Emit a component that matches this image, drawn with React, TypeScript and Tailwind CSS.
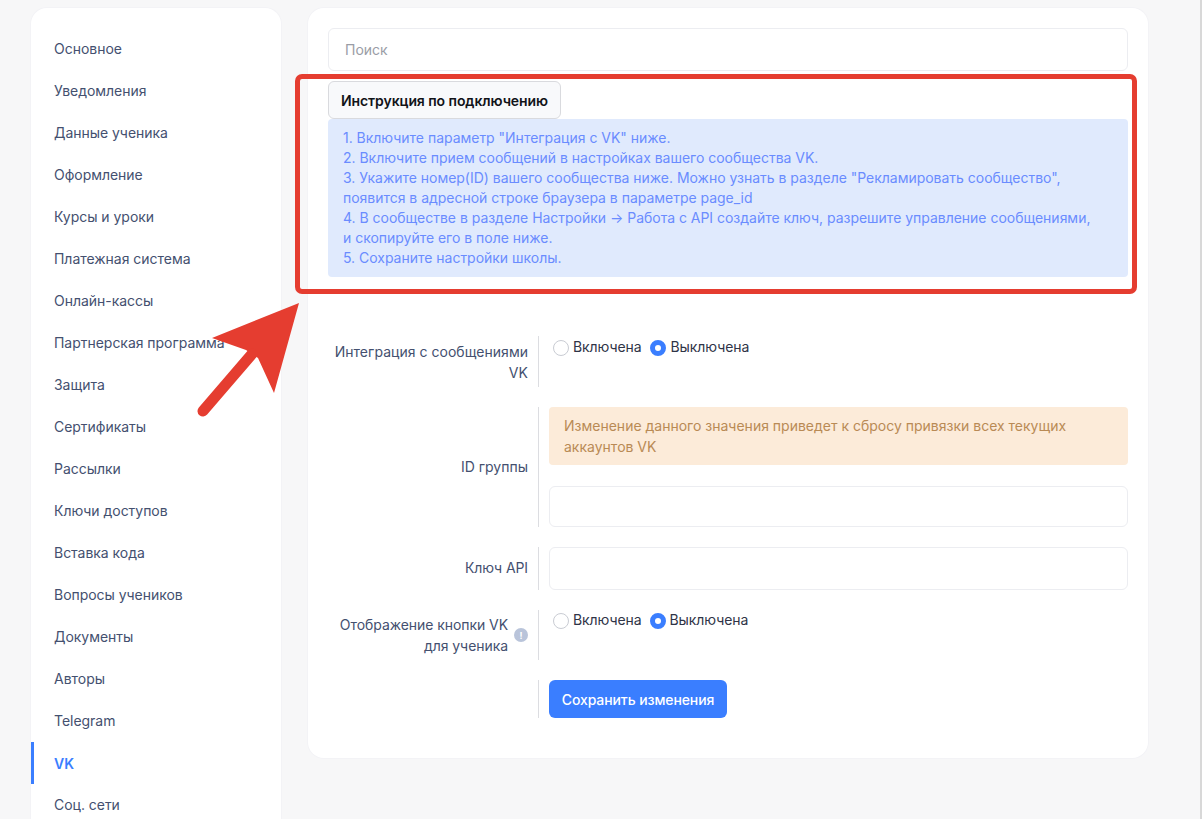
import React from "react";

const menuItems = [
  "Основное",
  "Уведомления",
  "Данные ученика",
  "Оформление",
  "Курсы и уроки",
  "Платежная система",
  "Онлайн-кассы",
  "Партнерская программа",
  "Защита",
  "Сертификаты",
  "Рассылки",
  "Ключи доступов",
  "Вставка кода",
  "Вопросы учеников",
  "Документы",
  "Авторы",
  "Telegram",
  "VK",
  "Соц. сети",
];

function Sidebar() {
  return (
    <aside className="w-[250px] shrink-0 self-start rounded-t-[16px] bg-white pt-[20px] shadow-[0_0_0_1px_#f3f3f6]">
      {menuItems.map((item) => (
        <div
          key={item}
          className={
            item === "VK"
              ? "flex h-[42px] items-center border-l-[3px] border-[#3a7eff] pl-[20px] text-[14px] font-semibold text-[#3a7eff]"
              : "flex h-[42px] -translate-y-[1px] items-center pl-[23px] text-[14px] tracking-[-0.03px] text-[#44506f]"
          }
        >
          {item}
        </div>
      ))}
    </aside>
  );
}

function Radios({ top, gap }: { top: string; gap: string }) {
  return (
    <div className={`flex items-start pl-[4px] text-[14px] leading-[21px] tracking-[-0.08px] text-[#2f3447] ${top}`}>
      <span className="mt-[4px] h-[16px] w-[16px] rounded-full border border-[#c9ccd3] bg-white" />
      <span className="ml-[4px]">Включена</span>
      <span className="ml-[8px] mt-[4px] h-[16px] w-[16px] rounded-full border-[5px] border-[#3a7eff] bg-white" />
      <span className={gap}>Выключена</span>
    </div>
  );
}

function FormRow({
  label,
  className,
  labelClass,
  children,
}: {
  label: React.ReactNode;
  className?: string;
  labelClass?: string;
  children?: React.ReactNode;
}) {
  return (
    <div className={`flex ${className ?? ""}`}>
      <div
        className={`flex w-[211px] shrink-0 items-center justify-end border-r border-[#dcdde1] py-[4px] pr-[10px] text-right text-[14px] leading-[21px] text-[#44506f] ${labelClass ?? ""}`}
      >
        {label}
      </div>
      <div className="min-w-0 flex-1 pl-[10px]">{children}</div>
    </div>
  );
}

export default function App() {
  return (
    <div
      className="relative h-[819px] overflow-hidden border-r-2 border-[#d8d8d8] bg-[#f7f7f8]"
      style={{ fontFamily: "Inter, 'Liberation Sans', sans-serif" }}
    >
      <div className="flex items-start gap-[27px] pl-[31px] pt-[8px]">
        <Sidebar />
        <main className="h-[750px] w-[840px] shrink-0 rounded-[16px] bg-white px-[20px] pt-[20px] shadow-[0_0_0_1px_#f3f3f6]">
          <div className="flex h-[43px] items-center rounded-[6px] border border-[#ecedf1] pl-[16px] text-[14px] text-[#9a9da6]">
            Поиск
          </div>
          <div className="mt-[10px] flex h-[38px] w-[233px] items-center justify-center rounded-[6px] border border-[#d9dade] bg-[#f8f9fb] text-[14px] font-semibold tracking-[-0.08px] text-[#111318]">
            Инструкция по подключению
          </div>
          <div className="rounded-[4px] bg-[#e0eafd] py-[9px] pl-[15px] pr-[30px] text-[14px] leading-[20px] tracking-[-0.02px] text-[#6a8cff]">
            1. Включите параметр "Интеграция с VK" ниже.
            <br />
            2. Включите прием сообщений в настройках вашего сообщества VK.
            <br />
            3. Укажите номер(ID) вашего сообщества ниже. Можно узнать в разделе "Рекламировать сообщество", появится в адресной строке браузера в параметре page_id
            <br />
            4. В сообществе в разделе Настройки → Работа с API создайте ключ, разрешите управление сообщениями, и скопируйте его в поле ниже.
            <br />
            5. Сохраните настройки школы.
          </div>

          <div className="mt-[59px] flex flex-col gap-[20px]">
            <FormRow label="Интеграция с сообщениями VK" className="h-[51px] tracking-[0.03px]">
              <Radios top="pt-0" gap="ml-[5px]" />
            </FormRow>
            <FormRow label="ID группы" labelClass="pb-[6px]">
              <div className="rounded-[4px] bg-[#fcebd9] px-[15px] py-[8px] text-[14px] leading-[21px] text-[#b98a55]">
                Изменение данного значения приведет к сбросу привязки всех текущих аккаунтов VK
              </div>
              <div className="mt-[21px] h-[41px] rounded-[6px] border border-[#ecedf1] bg-white" />
            </FormRow>
            <FormRow label="Ключ API" labelClass="pb-[6px] tracking-[-0.1px]">
              <div className="h-[43px] rounded-[6px] border border-[#ecedf1] bg-white" />
            </FormRow>
            <FormRow
              label={
                <span className="flex items-center">
                  <span className="w-[170px] tracking-[-0.06px]">Отображение кнопки VK для ученика</span>
                  <span className="ml-[6px] flex h-[14px] w-[14px] shrink-0 items-center justify-center rounded-full bg-[#b9c4da] text-[9px] font-bold text-white">
                    !
                  </span>
                </span>
              }
            >
              <Radios top="-mt-[1px]" gap="ml-[4px]" />
            </FormRow>
            <FormRow label="">
              <button className="flex h-[38px] w-[178px] items-center justify-center rounded-[6px] bg-[#3a7eff] text-[14px] font-medium tracking-[-0.1px] text-white">
                Сохранить изменения
              </button>
            </FormRow>
          </div>
        </main>
      </div>

      {/* annotation drawn over the screenshot */}
      <div className="pointer-events-none absolute left-[295px] top-[74px] h-[220px] w-[842px] rounded-[7px] border-[5px] border-[#e53d30]" />
      <svg className="pointer-events-none absolute left-0 top-0" width="400" height="450" viewBox="0 0 400 450">
        <polygon points="299,303 212,338 246,350 258,358 274,393" fill="#e53d30" />
        <line x1="203" y1="411" x2="252" y2="354" stroke="#e53d30" strokeWidth="11" strokeLinecap="round" />
      </svg>
    </div>
  );
}
